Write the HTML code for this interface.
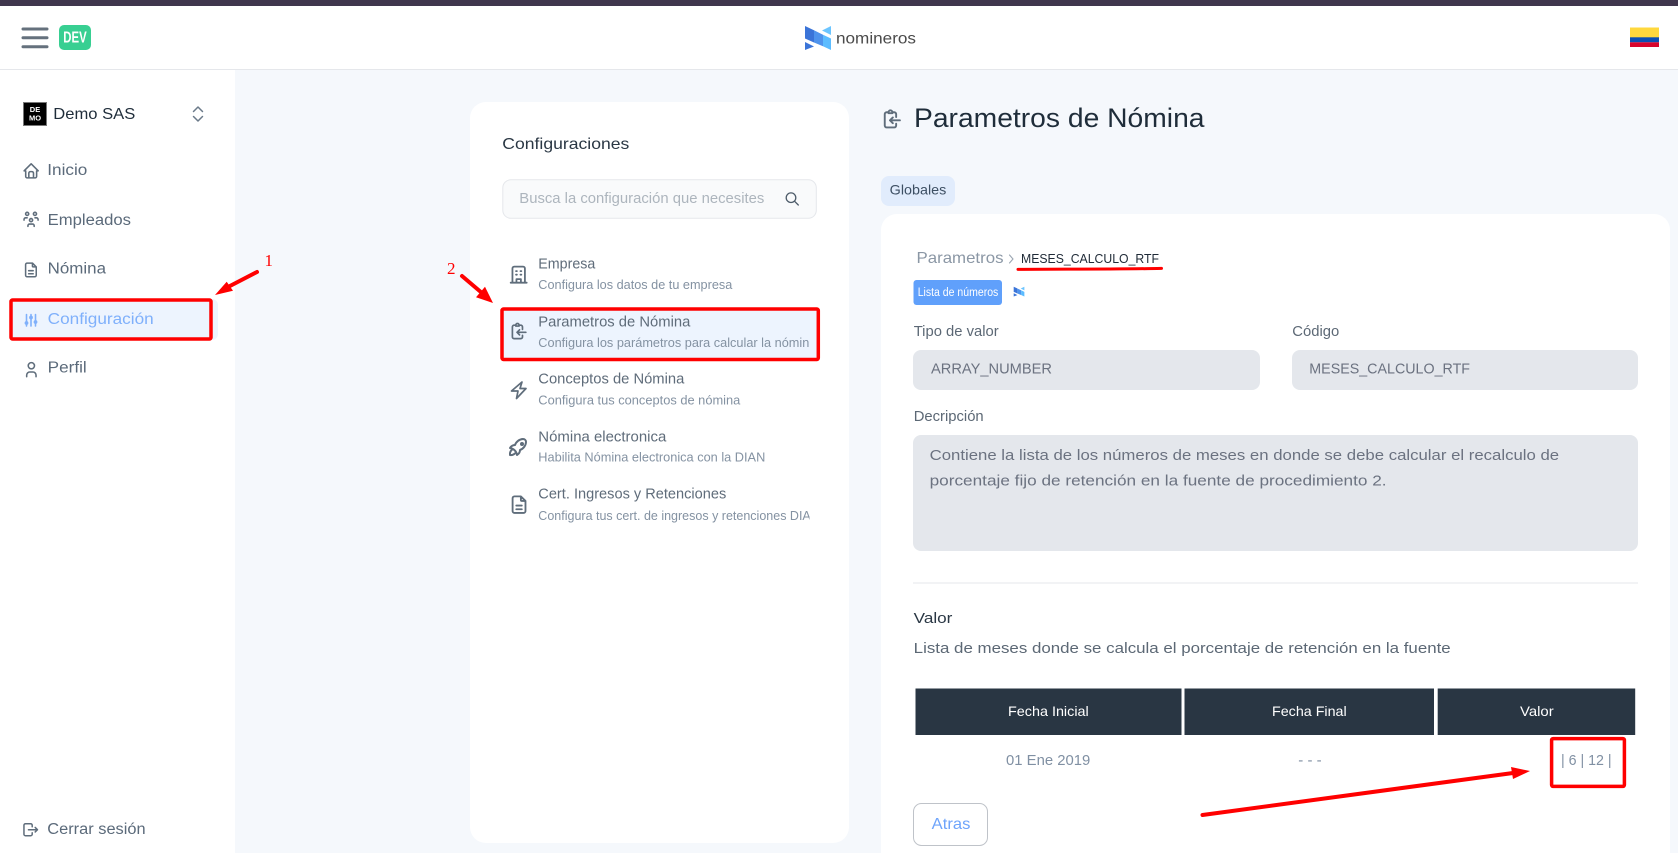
<!DOCTYPE html>
<html lang="es">
<head>
<meta charset="utf-8">
<title>Parametros de Nómina</title>
<style>
html,body{margin:0;padding:0;width:1678px;height:853px;overflow:hidden;background:#f5f8fc}
svg{display:block}
text{font-family:"Liberation Sans",Arial,sans-serif;white-space:pre}
.i{fill:none;stroke:#5f6d7b;stroke-width:2;stroke-linecap:round;stroke-linejoin:round}
.n{font-size:15.5px;fill:#5b6a7a}
.t{font-size:15px;fill:#5f6c7a}
.s{font-size:12.5px;fill:#8492a2}
.l{font-size:15px;fill:#5c6875}
.v{font-size:14.5px;fill:#6b7280}
.h{font-size:14px;fill:#fff;font-weight:400}
.c{font-size:15px;fill:#8090a3}
.r{font-family:"Liberation Serif",serif;font-size:17px;fill:#f00}
</style>
</head>
<body>
<svg width="1678" height="853" viewBox="0 0 1678 853" xmlns="http://www.w3.org/2000/svg">
<defs>
<clipPath id="clipSub"><rect x="530" y="500" width="279.5" height="30"/></clipPath>
<g id="logoN">
<polygon points="805,26 814,30.3 814,42.5 805,38.5" fill="#3b74d8"/>
<polygon points="814,30.3 823,34.7 823,46.3 814,42.5" fill="#4f93ec"/>
<polygon points="823,34.7 831,38.5 831,50 823,46.3" fill="#5cbcff"/>
<polygon points="822,30.5 831,26 831,35" fill="#6cc5ff"/>
<polygon points="805,42 814,46.5 805,50" fill="#3b74d8"/>
</g>
<g id="clip">
<path d="M9 5H7a2 2 0 0 0-2 2v12a2 2 0 0 0 2 2h8a2 2 0 0 0 2-2v-2"/>
<path d="M17 10V7a2 2 0 0 0-2-2h-2"/>
<path d="M9 5a2 2 0 0 1 2-2a2 2 0 0 1 2 2v1H9z"/>
<path d="M21 13.5H10.5l3-3M10.5 13.5l3 3"/>
</g>
</defs>

<!-- page background -->
<rect width="1678" height="853" fill="#f5f8fc"/>

<!-- sidebar -->
<rect x="0" y="70" width="235" height="783" fill="#fff"/>

<!-- header -->
<rect x="0" y="6" width="1678" height="63" fill="#fff"/>
<rect x="0" y="69" width="1678" height="1" fill="#e5e7eb"/>
<rect x="0" y="0" width="1678" height="6" fill="#40364d"/>
<path d="M23 29H47M23 37.7H47M23 46.7H47" stroke="#65717d" stroke-width="3" stroke-linecap="round" fill="none"/>
<rect x="59" y="25" width="32" height="25" rx="5" fill="#38cf92"/>
<text x="63.3" y="42.3" font-size="15.5" font-weight="700" fill="#fff" textLength="23.4" lengthAdjust="spacingAndGlyphs">DEV</text>
<use href="#logoN"/>
<text x="836" y="43.3" font-size="15.5" fill="#4a4a4a" textLength="80" lengthAdjust="spacingAndGlyphs">nomineros</text>
<rect x="1630" y="27.5" width="29" height="10" fill="#ffd83d"/>
<rect x="1630" y="37.3" width="29" height="5" fill="#0b4fb3"/>
<rect x="1630" y="42.3" width="29" height="4.7" fill="#d8042c"/>

<!-- company selector -->
<rect x="23.5" y="102.5" width="23" height="23" fill="#000" stroke="#777"/>
<text x="35" y="112.2" font-size="7.5" font-weight="700" fill="#fff" text-anchor="middle">DE</text>
<text x="35" y="120.4" font-size="7.5" font-weight="700" fill="#fff" text-anchor="middle">MO</text>
<text x="53.3" y="119" font-size="16" fill="#1f2d3a" textLength="82" lengthAdjust="spacingAndGlyphs">Demo SAS</text>
<path d="M193.5 111.5L198 107L202.5 111.5M193.5 116.5L198 121L202.5 116.5" fill="none" stroke="#6b7a89" stroke-width="1.5" stroke-linecap="round" stroke-linejoin="round"/>

<!-- navigation -->
<g class="i" transform="translate(21.8,161.5) scale(.78)"><path d="M5 12H3l9-9 9 9h-2M5 12v7a2 2 0 0 0 2 2h10a2 2 0 0 0 2-2v-7M9 21v-6a2 2 0 0 1 2-2h2a2 2 0 0 1 2 2v6"/></g>
<text class="n" x="47.3" y="175" textLength="40" lengthAdjust="spacingAndGlyphs">Inicio</text>

<g class="i" transform="translate(21.7,210) scale(.78)"><path d="M10 13a2 2 0 1 0 4 0a2 2 0 0 0-4 0M8 21v-1a2 2 0 0 1 2-2h4a2 2 0 0 1 2 2v1M15 5a2 2 0 1 0 4 0a2 2 0 0 0-4 0M17 10h2a2 2 0 0 1 2 2v1M5 5a2 2 0 1 0 4 0a2 2 0 0 0-4 0M3 13v-1a2 2 0 0 1 2-2h2"/></g>
<text class="n" x="47.7" y="225" textLength="83.3" lengthAdjust="spacingAndGlyphs">Empleados</text>

<g class="i" transform="translate(21.8,260.8) scale(.76)"><path d="M14 3v4a1 1 0 0 0 1 1h4M17 21H7a2 2 0 0 1-2-2V5a2 2 0 0 1 2-2h7l5 5v11a2 2 0 0 1-2 2zM9 13h6M9 17h6"/></g>
<text class="n" x="47.7" y="273.7" textLength="58.3" lengthAdjust="spacingAndGlyphs">Nómina</text>

<rect x="10" y="299" width="208" height="41" rx="6" fill="#edf4fe"/>
<path d="M26.5 314.5V326M31 314.5V326M35.5 314.5V326" stroke="#7fb0fb" stroke-width="1.6" stroke-linecap="round"/>
<circle cx="26.5" cy="323" r="1.9" fill="#7fb0fb"/><circle cx="31" cy="317.5" r="1.9" fill="#7fb0fb"/><circle cx="35.5" cy="322" r="1.9" fill="#7fb0fb"/>
<text class="n" x="47.7" y="324" style="fill:#7fb0fb" textLength="106" lengthAdjust="spacingAndGlyphs">Configuración</text>

<g class="i" transform="translate(22,360.3) scale(.78)"><path d="M8 7a4 4 0 1 0 8 0a4 4 0 0 0-8 0M6 21v-2a4 4 0 0 1 4-4h4a4 4 0 0 1 4 4v2"/></g>
<text class="n" x="47.7" y="372.7" textLength="39" lengthAdjust="spacingAndGlyphs">Perfil</text>

<g class="i" transform="translate(21.7,820.7) scale(.75)"><path d="M14 8V6a2 2 0 0 0-2-2H5a2 2 0 0 0-2 2v12a2 2 0 0 0 2 2h7a2 2 0 0 0 2-2v-2M9 12h12l-3-3M18 15l3-3"/></g>
<text class="n" x="47.3" y="834" textLength="98.3" lengthAdjust="spacingAndGlyphs">Cerrar sesión</text>

<!-- config panel -->
<rect x="470" y="102" width="379" height="741" rx="16" fill="#fff"/>
<text x="502.3" y="149" font-size="16" fill="#2a3744" textLength="127" lengthAdjust="spacingAndGlyphs">Configuraciones</text>
<rect x="502.8" y="179.8" width="313.5" height="38.5" rx="8" fill="#f9fafb" stroke="#e5e7eb"/>
<text x="519.3" y="203" font-size="14.5" fill="#adb5bd" textLength="245" lengthAdjust="spacingAndGlyphs">Busca la configuración que necesites</text>
<circle cx="791" cy="197.7" r="4.8" fill="none" stroke="#4d5b69" stroke-width="1.3"/>
<path d="M795 201.7L798.3 205" stroke="#4d5b69" stroke-width="1.3" stroke-linecap="round"/>

<g class="i" transform="translate(508,264) scale(.89)"><path d="M3 21h18M5 21V5a2 2 0 0 1 2-2h10a2 2 0 0 1 2 2v16M9.5 21v-4h5v4M9 8h1M9 12h1M14 8h1M14 12h1"/></g>
<text class="t" x="538.3" y="268.6" textLength="57" lengthAdjust="spacingAndGlyphs">Empresa</text>
<text class="s" x="538.3" y="289" textLength="194" lengthAdjust="spacingAndGlyphs">Configura los datos de tu empresa</text>

<rect x="502" y="309" width="316" height="50.5" fill="#edf4fe"/>
<g class="i" transform="translate(508.2,321) scale(.84)"><use href="#clip"/></g>
<text class="t" x="538.3" y="326.4" textLength="152" lengthAdjust="spacingAndGlyphs">Parametros de Nómina</text>
<text class="s" x="538.3" y="347" textLength="271" lengthAdjust="spacingAndGlyphs">Configura los parámetros para calcular la nómin</text>

<path d="M522 382L511.5 391H518L516.5 398.5L526 388.5H520L522 382Z" fill="none" stroke="#5f6d7b" stroke-width="1.7" stroke-linejoin="round"/>
<text class="t" x="538.3" y="383.7" textLength="146" lengthAdjust="spacingAndGlyphs">Conceptos de Nómina</text>
<text class="s" x="538.3" y="404.7" textLength="202" lengthAdjust="spacingAndGlyphs">Configura tus conceptos de nómina</text>

<g class="i" transform="translate(506,435) scale(1)"><path d="M4 13a8 8 0 0 1 7 7a6 6 0 0 0 3-5a9 9 0 0 0 6-8a3 3 0 0 0-3-3a9 9 0 0 0-8 6a6 6 0 0 0-5 3M7 14a6 6 0 0 0-3 6a6 6 0 0 0 6-3M15 9a1 1 0 1 0 2 0a1 1 0 1 0-2 0"/></g>
<text class="t" x="538.3" y="441.7" textLength="128" lengthAdjust="spacingAndGlyphs">Nómina electronica</text>
<text class="s" x="538.3" y="461.7" textLength="227" lengthAdjust="spacingAndGlyphs">Habilita Nómina electronica con la DIAN</text>

<g class="i" transform="translate(508,493.6) scale(.92)"><path d="M14 3v4a1 1 0 0 0 1 1h4M17 21H7a2 2 0 0 1-2-2V5a2 2 0 0 1 2-2h7l5 5v11a2 2 0 0 1-2 2zM9 13h6M9 17h6"/></g>
<text class="t" x="538.3" y="498.7" textLength="188" lengthAdjust="spacingAndGlyphs">Cert. Ingresos y Retenciones</text>
<g clip-path="url(#clipSub)"><text class="s" x="538.3" y="520" textLength="281.5" lengthAdjust="spacingAndGlyphs">Configura tus cert. de ingresos y retenciones DIAN</text></g>

<!-- page title -->
<g class="i" transform="translate(880,107.5) scale(.95)"><use href="#clip"/></g>
<text x="914" y="127.2" font-size="27" fill="#1f2d3a" textLength="290.5" lengthAdjust="spacingAndGlyphs">Parametros de Nómina</text>
<rect x="881" y="176" width="74" height="30" rx="8" fill="#e1ecfc"/>
<text x="889.7" y="194.6" font-size="14" fill="#3d4f63" textLength="56.6" lengthAdjust="spacingAndGlyphs">Globales</text>

<!-- main card -->
<path d="M897 214H1654a16 16 0 0 1 16 16V853H881V230a16 16 0 0 1 16-16z" fill="#fff"/>
<text x="916.5" y="263" font-size="16" fill="#8b97a5" textLength="87" lengthAdjust="spacingAndGlyphs">Parametros</text>
<path d="M1009.5 255L1013 259L1009.5 263" fill="none" stroke="#9aa5b1" stroke-width="1.1" stroke-linecap="round"/>
<text x="1021" y="263" font-size="13" fill="#1f2a37" textLength="138" lengthAdjust="spacingAndGlyphs">MESES_CALCULO_RTF</text>
<path d="M1018 269.4C1060 269 1110 269.4 1161.5 268.4" fill="none" stroke="#f00" stroke-width="3" stroke-linecap="round"/>
<rect x="913.5" y="280" width="88.5" height="25" rx="3" fill="#60a0fb"/>
<text x="917.7" y="296" font-size="11.5" fill="#fff" textLength="80.6" lengthAdjust="spacingAndGlyphs">Lista de números</text>
<use href="#logoN" transform="translate(1013.7,286.7) scale(.41) translate(-805,-26)"/>

<text class="l" x="913.7" y="336" textLength="85" lengthAdjust="spacingAndGlyphs">Tipo de valor</text>
<rect x="913" y="350" width="347" height="40" rx="8" fill="#e4e7ec"/>
<text class="v" x="931" y="373.6" textLength="121" lengthAdjust="spacingAndGlyphs">ARRAY_NUMBER</text>
<text class="l" x="1292.3" y="336" textLength="47" lengthAdjust="spacingAndGlyphs">Código</text>
<rect x="1292" y="350" width="346" height="40" rx="8" fill="#e4e7ec"/>
<text class="v" x="1309.3" y="373.6" textLength="160.7" lengthAdjust="spacingAndGlyphs">MESES_CALCULO_RTF</text>

<text class="l" x="913.7" y="421" textLength="70" lengthAdjust="spacingAndGlyphs">Decripción</text>
<rect x="913" y="435" width="725" height="116" rx="8" fill="#e4e7ec"/>
<text x="929.6" y="460.2" font-size="15" fill="#6b7280" textLength="629.5" lengthAdjust="spacingAndGlyphs">Contiene la lista de los números de meses en donde se debe calcular el recalculo de</text>
<text x="929.6" y="485.6" font-size="15" fill="#6b7280" textLength="457" lengthAdjust="spacingAndGlyphs">porcentaje fijo de retención en la fuente de procedimiento 2.</text>
<rect x="913" y="582.5" width="725" height="1" fill="#e5e7eb"/>

<text x="913.7" y="623" font-size="15" fill="#2a3744" textLength="38.7" lengthAdjust="spacingAndGlyphs">Valor</text>
<text class="l" x="913.7" y="653" textLength="537" lengthAdjust="spacingAndGlyphs">Lista de meses donde se calcula el porcentaje de retención en la fuente</text>

<!-- table -->
<rect x="915.5" y="688.5" width="266" height="46.5" fill="#293643"/>
<rect x="1184.5" y="688.5" width="249.5" height="46.5" fill="#293643"/>
<rect x="1437.7" y="688.5" width="197.5" height="46.5" fill="#293643"/>
<text class="h" x="1008" y="716" textLength="80.7" lengthAdjust="spacingAndGlyphs">Fecha Inicial</text>
<text class="h" x="1272" y="716" textLength="74.7" lengthAdjust="spacingAndGlyphs">Fecha Final</text>
<text class="h" x="1520" y="716" textLength="33.7" lengthAdjust="spacingAndGlyphs">Valor</text>
<text class="c" x="1006" y="765" textLength="84.3" lengthAdjust="spacingAndGlyphs">01 Ene 2019</text>
<text class="c" x="1298.3" y="765" textLength="23.4" lengthAdjust="spacingAndGlyphs">- - -</text>
<text class="c" x="1561" y="765" textLength="50.6" lengthAdjust="spacingAndGlyphs">| 6 | 12 |</text>

<!-- back button -->
<rect x="913.5" y="803.5" width="74" height="42" rx="8" fill="#fff" stroke="#bfc3c9"/>
<text x="931.7" y="829" font-size="16" fill="#6ea4fb" textLength="38.7" lengthAdjust="spacingAndGlyphs">Atras</text>

<!-- red annotations -->
<g fill="none" stroke="#f00" stroke-linejoin="round">
<rect x="11" y="300" width="200" height="39" rx="1.5" stroke-width="3.5"/>
<rect x="502" y="309" width="316.3" height="50.5" rx="1.5" stroke-width="3.5"/>
<rect x="1551.6" y="738.6" width="72.8" height="47.8" rx="1.5" stroke-width="3.5"/>
</g>
<g stroke="#f00" stroke-linecap="round" fill="#f00">
<path d="M257 272L228 287" stroke-width="4" fill="none"/>
<polygon points="215,295 226.7,281.7 233,290.7" stroke="none"/>
<path d="M462 276L482 293" stroke-width="4" fill="none"/>
<polygon points="493,303 485,286.7 476,297.3" stroke="none"/>
<path d="M1202.5 815L1513 773" stroke-width="4" fill="none"/>
<polygon points="1530,771 1511,767 1513,779" stroke="none"/>
</g>
<text class="r" x="264.5" y="266">1</text>
<text class="r" x="447" y="274">2</text>
</svg>
</body>
</html>
